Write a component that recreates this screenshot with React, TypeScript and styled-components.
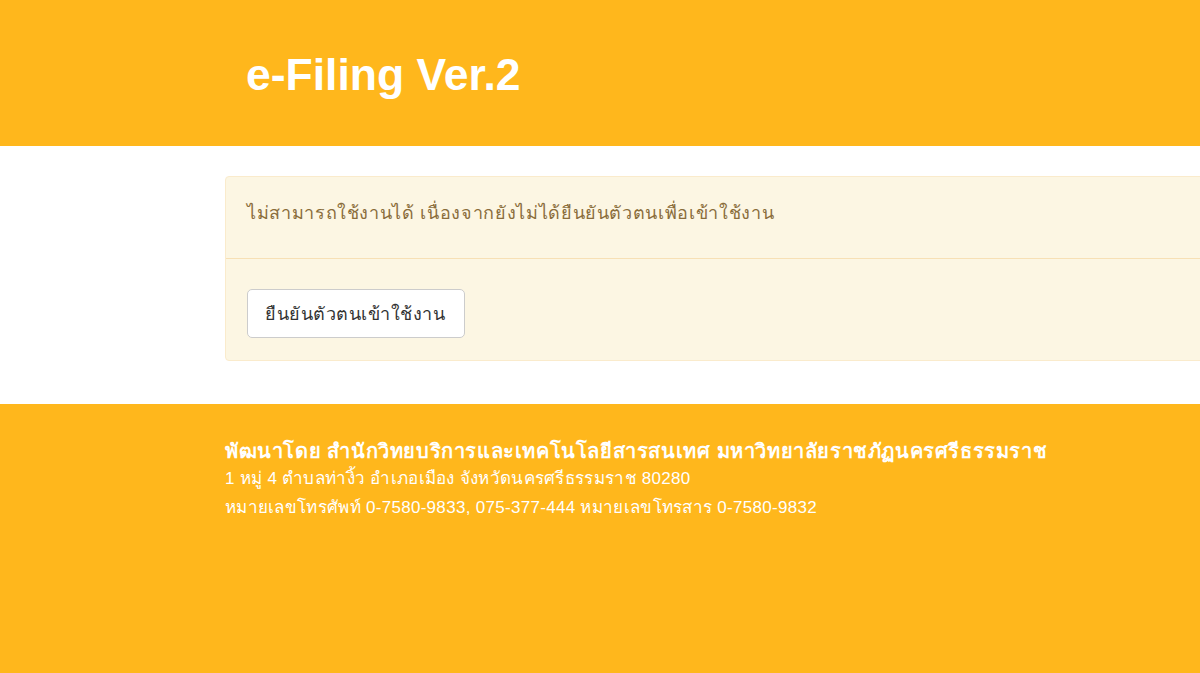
import React from "react";
import styled, { createGlobalStyle } from "styled-components";

const Global = createGlobalStyle`
  html, body { margin: 0; padding: 0; background: #ffffff; overflow: hidden; }
  body { font-family: "Liberation Sans", Arial, sans-serif; }
  * { box-sizing: border-box; }
`;

const YELLOW = "#ffb71c";

const Page = styled.div`
  width: 1200px;
  min-height: 673px;
  display: flex;
  flex-direction: column;
  overflow: hidden;
`;

const Header = styled.header`
  background: ${YELLOW};
  height: 146px;
  display: flex;
  align-items: center;
`;

const Container = styled.div`
  width: 1170px;
  margin-left: 225px;
  flex-shrink: 0;
`;

const Title = styled.h1`
  margin: 0 0 0 21px;
  color: #ffffff;
  font-size: 44.5px;
  font-weight: 700;
  line-height: 1;
  padding-top: 4px;
`;

const Main = styled.main`
  padding: 30px 0 43px;
  display: flex;
`;

const Panel = styled.section`
  background: #fcf6e3;
  border: 1px solid #faebcc;
  border-radius: 4px;
  display: flex;
  flex-direction: column;
`;

const PanelBody = styled.div`
  padding: 23px 21px 32px;
  border-bottom: 1px solid #f7e0b5;
`;

const Message = styled.p`
  margin: 0;
  font-size: 18px;
  line-height: 26px;
  letter-spacing: 0.65px;
  color: #8a6d3b;
`;

const PanelFooter = styled.div`
  padding: 30px 21px 22px;
`;

const Button = styled.button`
  height: 49px;
  width: 218px;
  padding: 0 17px;
  background: #ffffff;
  border: 1px solid #cccccc;
  border-radius: 5px;
  font-family: inherit;
  font-size: 18px;
  letter-spacing: 0.5px;
  color: #333333;
  text-align: left;
`;

const Footer = styled.footer`
  background: ${YELLOW};
  flex: 1;
  padding-top: 34px;
  display: flex;
  color: #ffffff;
`;

const Org = styled.div`
  font-size: 20px;
  font-weight: 700;
  line-height: 26px;
  letter-spacing: 0.6px;
`;

const Line = styled.div`
  font-size: 17px;
  line-height: 29px;
  letter-spacing: 0.3px;
`;

export default function App() {
  return (
    <Page>
      <Global />
      <Header>
        <Container>
          <Title>e-Filing Ver.2</Title>
        </Container>
      </Header>
      <Main>
        <Container>
          <Panel>
            <PanelBody>
              <Message>ไม่สามารถใช้งานได้ เนื่องจากยังไม่ได้ยืนยันตัวตนเพื่อเข้าใช้งาน</Message>
            </PanelBody>
            <PanelFooter>
              <Button>ยืนยันตัวตนเข้าใช้งาน</Button>
            </PanelFooter>
          </Panel>
        </Container>
      </Main>
      <Footer>
        <Container>
          <Org>พัฒนาโดย สำนักวิทยบริการและเทคโนโลยีสารสนเทศ มหาวิทยาลัยราชภัฏนครศรีธรรมราช</Org>
          <Line>1 หมู่ 4 ตำบลท่างิ้ว อำเภอเมือง จังหวัดนครศรีธรรมราช 80280</Line>
          <Line>หมายเลขโทรศัพท์ 0-7580-9833, 075-377-444 หมายเลขโทรสาร 0-7580-9832</Line>
        </Container>
      </Footer>
    </Page>
  );
}
